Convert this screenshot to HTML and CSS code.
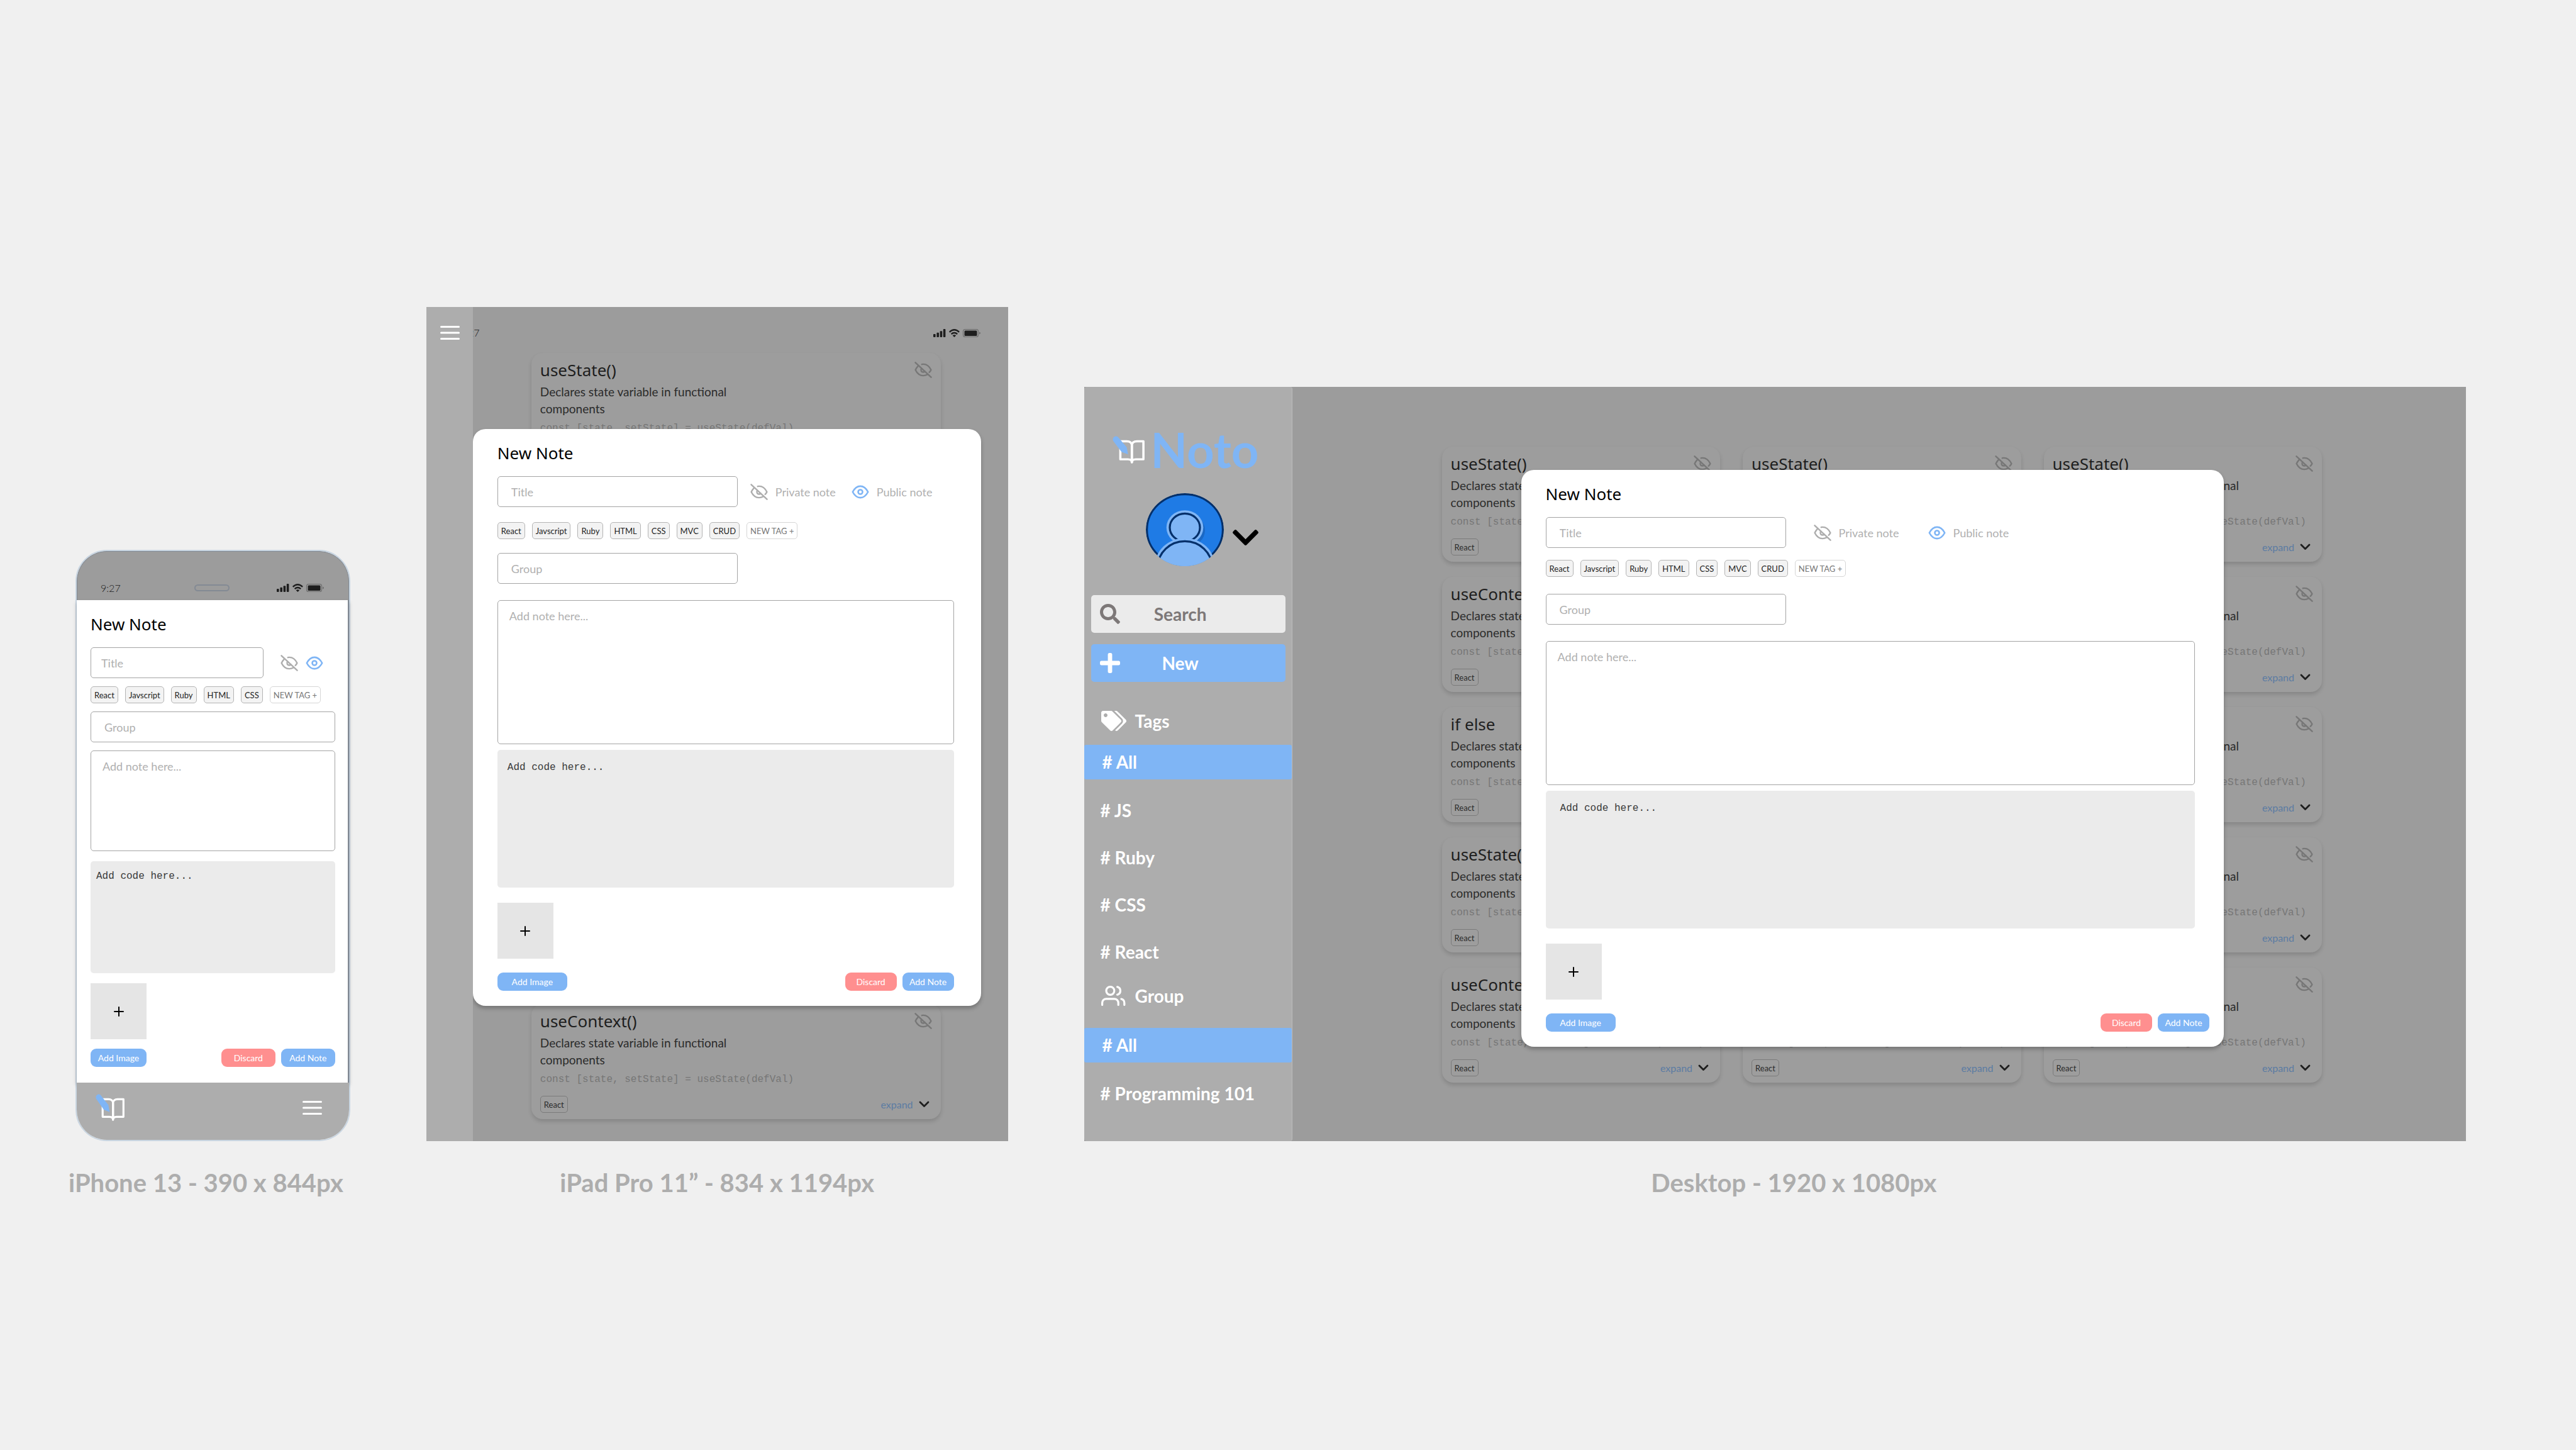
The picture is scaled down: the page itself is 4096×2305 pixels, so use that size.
FILE: index.html
```html
<!DOCTYPE html>
<html lang="en">
<head>
<meta charset="utf-8">
<title>Noto – New Note</title>
<meta name="viewport" content="width=device-width, initial-scale=1">
<link rel="stylesheet" href="styles.css">
</head>
<body>
<svg class="sprite" aria-hidden="true">
  <symbol id="eye" viewBox="0 0 28 26"><g fill="none" stroke="currentColor" stroke-width="2.6" stroke-linejoin="round"><path d="M1.8 13C5 7 9 3.9 14 3.9S23 7 26.2 13C23 19 19 22.100 14 22.100S5 19 1.800 13Z"/><circle cx="14" cy="13" r="3.500"/></g></symbol>
  <symbol id="eye-off" viewBox="0 0 28 26"><g fill="none" stroke="currentColor" stroke-width="2.400" stroke-linecap="round" stroke-linejoin="round"><path d="M1.500 1.300L26.500 24.700"/><path d="M5.600 7.200C3.800 9 2.600 11 1.600 13C4.500 19 9 22.100 14 22.100C16.300 22.100 18.500 21.500 20.300 20.500"/><path d="M11.800 4.200C12.500 4 13.300 3.900 14 3.900C19 3.900 23.500 7 26.400 13C25.800 14.400 24.900 15.700 23.600 16.800"/><path d="M11.300 10.600C9 13.400 11.200 16.500 14 16.500C15.200 16.500 16 16.100 16.700 15.500"/></g></symbol>
  <symbol id="book" viewBox="0 0 46 43" preserveAspectRatio="none"><g fill="none" stroke="#fff" stroke-width="3.200" stroke-linejoin="round" stroke-linecap="round"><path d="M11.200 8.300H20.500C24.700 8.300 27.700 10.500 27.700 14.500V41C27.700 37.500 25.500 36.300 22 36.300H11.200Z"/><path d="M44.300 8.300H35C30.700 8.300 27.700 10.500 27.700 14.500V41C27.700 37.500 29.900 36.300 33.400 36.300H44.300Z"/></g><path fill="#7fb5f5" d="M7.500 1.200L20.300 17.500L22.300 28.700L13 25L1 7.800C-1 3.500 3 -1.500 7.500 1.200Z"/></symbol>
  <symbol id="menu" viewBox="0 0 31 22"><path d="M1.500 1.500H29.500M1.500 11H29.500M1.500 20.500H29.500" stroke="#fff" stroke-width="3" stroke-linecap="round"/></symbol>
  <symbol id="status" viewBox="0 0 75 13"><g fill="#1e1e1e"><rect x="0" y="8" width="3.600" height="5" rx="1"/><rect x="5.400" y="5.800" width="3.600" height="7.200" rx="1"/><rect x="10.600" y="3.200" width="3.600" height="9.800" rx="1"/><rect x="15.800" y="0" width="3.600" height="13" rx="1"/><path d="M30.600 10.200Q33.400 8.200 36.200 10.200L33.400 13Z"/><rect x="49.500" y="2.500" width="20" height="8.500" rx="1.500"/></g><g fill="none" stroke="#1e1e1e" stroke-width="2.300"><path d="M25.700 4.900Q33.400 -2.400 41.100 4.900"/><path d="M28.600 8.100Q33.400 4 38.200 8.100"/></g><rect x="47.500" y=".6" width="24" height="12" rx="3" fill="none" stroke="#6e6e6e" stroke-width="1.200"/><path d="M73 4.500Q75 5 75 6.500T73 8.600Z" fill="#6e6e6e"/></symbol>
  <symbol id="chevron" viewBox="5 123 438 266"><path fill="currentColor" d="M207.029 381.476L12.686 187.132c-9.373-9.373-9.373-24.569 0-33.941l22.667-22.667c9.357-9.357 24.522-9.375 33.901-.04L224 284.505l154.745-154.021c9.379-9.335 24.544-9.317 33.901.04l22.667 22.667c9.373 9.373 9.373 24.569 0 33.941L240.971 381.476c-9.373 9.372-24.569 9.372-33.942 0z"/></symbol>
  <symbol id="caret" viewBox="0 0 17 11"><path d="M2 2L8.500 8.600L15 2" fill="none" stroke="#1e1e1e" stroke-width="2.800" stroke-linecap="round" stroke-linejoin="round"/></symbol>
  <symbol id="plus-thin" viewBox="0 0 16 16"><path d="M8 1V15M1 8H15" stroke="#000" stroke-width="2" stroke-linecap="round"/></symbol>
  <symbol id="plus" viewBox="0 32 448 448"><path fill="#fff" d="M416 208H272V64c0-17.670-14.330-32-32-32h-32c-17.670 0-32 14.330-32 32v144H32c-17.670 0-32 14.330-32 32v32c0 17.670 14.330 32 32 32h144v144c0 17.670 14.330 32 32 32h32c17.670 0 32-14.330 32-32V304h144c17.670 0 32-14.330 32-32v-32c0-17.670-14.330-32-32-32z"/></symbol>
  <symbol id="search" viewBox="0 0 512 512"><path fill="#7d7878" d="M505 442.700L405.300 343c-4.500-4.500-10.600-7-17-7H372c27.600-35.300 44-79.700 44-128C416 93.100 322.900 0 208 0S0 93.100 0 208s93.100 208 208 208c48.300 0 92.700-16.400 128-44v16.300c0 6.400 2.500 12.500 7 17l99.700 99.700c9.400 9.400 24.600 9.400 33.900 0l28.300-28.300c9.400-9.400 9.400-24.600.1-34zM208 336c-70.700 0-128-57.200-128-128 0-70.700 57.200-128 128-128 70.700 0 128 57.200 128 128 0 70.700-57.200 128-128 128z"/></symbol>
  <symbol id="tags" viewBox="0 0 640 512"><path fill="#fff" d="M497.941 225.941L286.059 14.059A48 48 0 0 0 252.118 0H48C21.490 0 0 21.490 0 48v204.118a48 48 0 0 0 14.059 33.941l211.882 211.882c18.744 18.745 49.136 18.746 67.882 0l204.118-204.118c18.745-18.745 18.745-49.137 0-67.882zM112 160c-26.510 0-48-21.490-48-48s21.490-48 48-48 48 21.490 48 48-21.490 48-48 48zm513.941 133.823L421.823 497.941c-18.745 18.745-49.137 18.745-67.882 0l-.36-.36L527.640 323.522c16.999-16.999 26.360-39.600 26.360-63.640s-9.362-46.641-26.360-63.640L331.397 0h48.721a48 48 0 0 1 33.941 14.059l211.882 211.882c18.745 18.745 18.745 49.137 0 67.882z"/></symbol>
  <symbol id="users" viewBox="0 2 24 20" preserveAspectRatio="xMinYMid"><g fill="none" stroke="#fff" stroke-width="2" stroke-linecap="round" stroke-linejoin="round"><path d="M17 21v-2a4 4 0 0 0-4-4H5a4 4 0 0 0-4 4v2"/><circle cx="9" cy="7" r="4"/><path d="M23 21v-2a4 4 0 0 0-3-3.870M16 3.130a4 4 0 0 1 0 7.750"/></g></symbol>
</svg>

<main class="board">
  <section class="phone" aria-label="Phone layout">
    <header class="phone-head">
      <span class="clock">9:27</span><span class="speaker"></span><svg class="status-icons"><use href="#status"/></svg>
    </header>
    <form class="dialog dialog-phone">
      <h2 class="dialog-title">New Note</h2>
      <div class="title-row">
        <input class="field field-title" type="text" placeholder="Title" aria-label="Title">
        <button type="button" class="visibility" aria-label="Private note"><svg class="eye"><use href="#eye-off"/></svg></button>
        <button type="button" class="visibility" aria-label="Public note"><svg class="eye eye-on"><use href="#eye"/></svg></button>
      </div>
      <div class="tags">
        <span class="tag">React</span><span class="tag">Javscript</span><span class="tag">Ruby</span><span class="tag">HTML</span><span class="tag">CSS</span><button type="button" class="tag tag-new">NEW TAG +</button>
      </div>
      <input class="field field-group" type="text" placeholder="Group" aria-label="Group">
      <textarea class="field note" placeholder="Add note here..." aria-label="Note"></textarea>
      <textarea class="code" placeholder="Add code here..." aria-label="Code"></textarea>
      <button type="button" class="image-slot" aria-label="Choose image"><svg class="plus-thin"><use href="#plus-thin"/></svg></button>
      <div class="actions">
        <button type="button" class="btn btn-image">Add Image</button>
        <button type="button" class="btn btn-discard">Discard</button>
        <button type="submit" class="btn btn-add">Add Note</button>
      </div>
    </form>
    <footer class="phone-foot">
      <svg class="book-small"><use href="#book"/></svg>
      <svg class="menu"><use href="#menu"/></svg>
    </footer>
  </section>

  <section class="tablet" aria-label="Tablet layout">
    <nav class="rail"><svg class="menu"><use href="#menu"/></svg></nav>
    <div class="tablet-main">
      <div class="tablet-status"><span class="clock">9:27</span><svg class="status-icons"><use href="#status"/></svg></div>
      <div class="cards cards-tablet" id="tablet-cards"></div>
    </div>
    <form class="dialog dialog-large dialog-tablet">
      <h2 class="dialog-title">New Note</h2>
      <div class="title-row">
        <input class="field field-title" type="text" placeholder="Title" aria-label="Title">
        <button type="button" class="visibility"><svg class="eye"><use href="#eye-off"/></svg>Private note</button>
        <button type="button" class="visibility"><svg class="eye eye-on"><use href="#eye"/></svg>Public note</button>
      </div>
      <div class="tags">
        <span class="tag">React</span><span class="tag">Javscript</span><span class="tag">Ruby</span><span class="tag">HTML</span><span class="tag">CSS</span><span class="tag">MVC</span><span class="tag">CRUD</span><button type="button" class="tag tag-new">NEW TAG +</button>
      </div>
      <input class="field field-group" type="text" placeholder="Group" aria-label="Group">
      <textarea class="field note" placeholder="Add note here..." aria-label="Note"></textarea>
      <textarea class="code" placeholder="Add code here..." aria-label="Code"></textarea>
      <button type="button" class="image-slot" aria-label="Choose image"><svg class="plus-thin"><use href="#plus-thin"/></svg></button>
      <div class="actions">
        <button type="button" class="btn btn-image">Add Image</button>
        <button type="button" class="btn btn-discard">Discard</button>
        <button type="submit" class="btn btn-add">Add Note</button>
      </div>
    </form>
  </section>

  <section class="desktop" aria-label="Desktop layout">
    <aside class="sidebar">
      <div class="logo"><svg class="book-large"><use href="#book"/></svg><span>Noto</span></div>
      <div class="profile">
        <svg class="avatar" viewBox="0 0 124 116">
          <defs><clipPath id="face"><ellipse cx="62" cy="58" rx="62" ry="58"/></clipPath></defs>
          <g clip-path="url(#face)">
            <ellipse cx="62" cy="58" rx="60.400" ry="56.400" fill="#1f7be5" stroke="#03306b" stroke-width="3.200"/>
            <ellipse cx="66" cy="59" rx="28" ry="26" fill="#1a68c4"/>
            <ellipse cx="62" cy="54.500" rx="29.300" ry="27.300" fill="#7fb5f5"/>
            <ellipse cx="62" cy="54.500" rx="24" ry="22.200" fill="#7fb5f5" stroke="#03306b" stroke-width="3.200"/>
            <ellipse cx="62" cy="117" rx="48" ry="45.800" fill="#7fb5f5"/>
            <ellipse cx="62" cy="117" rx="43" ry="40.600" fill="#7fb5f5" stroke="#03306b" stroke-width="3.200"/>
          </g>
        </svg>
        <svg class="profile-caret"><use href="#chevron"/></svg>
      </div>
      <label class="side-box search"><svg class="side-icon"><use href="#search"/></svg><input class="search-input" type="text" placeholder="Search" aria-label="Search"></label>
      <button type="button" class="side-box new"><svg class="side-icon"><use href="#plus"/></svg><span class="new-label">New</span></button>
      <h3 class="side-head"><svg class="side-head-icon"><use href="#tags"/></svg>Tags</h3>
      <nav class="side-list">
        <a class="side-link active" href="#all"># All</a>
        <a class="side-link" href="#js"># JS</a>
        <a class="side-link" href="#ruby"># Ruby</a>
        <a class="side-link" href="#css"># CSS</a>
        <a class="side-link" href="#react"># React</a>
      </nav>
      <h3 class="side-head side-head-group"><svg class="side-head-icon"><use href="#users"/></svg>Group</h3>
      <nav class="side-list">
        <a class="side-link active" href="#all-groups"># All</a>
        <a class="side-link" href="#programming"># Programming 101</a>
      </nav>
    </aside>
    <div class="desktop-main">
      <div class="cards cards-desktop" id="desktop-cards"></div>
    </div>
    <form class="dialog dialog-large dialog-desktop">
      <h2 class="dialog-title">New Note</h2>
      <div class="title-row">
        <input class="field field-title" type="text" placeholder="Title" aria-label="Title">
        <button type="button" class="visibility"><svg class="eye"><use href="#eye-off"/></svg>Private note</button>
        <button type="button" class="visibility"><svg class="eye eye-on"><use href="#eye"/></svg>Public note</button>
      </div>
      <div class="tags">
        <span class="tag">React</span><span class="tag">Javscript</span><span class="tag">Ruby</span><span class="tag">HTML</span><span class="tag">CSS</span><span class="tag">MVC</span><span class="tag">CRUD</span><button type="button" class="tag tag-new">NEW TAG +</button>
      </div>
      <input class="field field-group" type="text" placeholder="Group" aria-label="Group">
      <textarea class="field note" placeholder="Add note here..." aria-label="Note"></textarea>
      <textarea class="code" placeholder="Add code here..." aria-label="Code"></textarea>
      <button type="button" class="image-slot" aria-label="Choose image"><svg class="plus-thin"><use href="#plus-thin"/></svg></button>
      <div class="actions">
        <button type="button" class="btn btn-image">Add Image</button>
        <button type="button" class="btn btn-discard">Discard</button>
        <button type="submit" class="btn btn-add">Add Note</button>
      </div>
    </form>
  </section>

  <p class="caption caption-phone">iPhone 13 - 390 x 844px</p>
  <p class="caption caption-tablet">iPad Pro 11” - 834 x 1194px</p>
  <p class="caption caption-desktop">Desktop - 1920 x 1080px</p>
</main>

<template id="card">
  <article class="card">
    <div class="card-head"><h3 class="card-title"></h3><svg class="eye"><use href="#eye-off"/></svg></div>
    <p class="card-text">Declares state variable in functional components</p>
    <code class="card-code">const [state, setState] = useState(defVal)</code>
    <div class="card-foot"><span class="tag">React</span><a class="expand" href="#expand">expand<svg class="caret"><use href="#caret"/></svg></a></div>
  </article>
</template>
<script src="cards.js"></script>
</body>
</html>
```
FILE: cards.js
```javascript
// Titles of the note cards, one entry per row of the list.
const rows = ["useState()", "useContext()", "if else", "useState()", "useContext()"];

function fill(id, titles) {
  const list = document.getElementById(id);
  const template = document.getElementById("card");
  for (const title of titles) {
    const card = template.content.cloneNode(true);
    card.querySelector(".card-title").textContent = title;
    list.append(card);
  }
}

fill("tablet-cards", [...rows, "useContext()"]);
fill("desktop-cards", rows.flatMap((title) => [title, title, title]));
```
FILE: styles.css
```css
* { box-sizing: border-box; }

:root {
  --grey: #adadad;
  --dim: #9c9c9c;
  --blue: #7fb5f5;
  --round: Lato, "Open Sans", sans-serif;
}

body {
  margin: 0;
  background: #f0f0f0;
  font-family: var(--round);
  font-size: 18px;
}

h2, h3, p { margin: 0; }
svg { display: block; flex: none; }
a { color: inherit; text-decoration: none; }
button, input, textarea { font: inherit; margin: 0; padding: 0; border: 0; background: none; outline: 0; }
textarea { display: block; resize: none; }
.sprite { position: absolute; width: 0; height: 0; }

.board {
  display: grid;
  grid-template-columns: 436fr 925fr 2198fr;
  column-gap: 121px;
  row-gap: 41px;
  align-items: end;
  align-content: start;
  min-height: 100vh;
  padding: 488px 175px 0 120px;
}

.caption {
  color: var(--grey);
  font-size: 40px;
  font-weight: 700;
  line-height: 50px;
  text-align: center;
  white-space: nowrap;
}
.caption-phone { margin: 0 11px 0 -11px; }
.caption-desktop { padding-left: 60px; }

/* Shared icons */
.eye { width: 28px; height: 26px; color: #777; }
.menu { width: 31px; height: 22px; }
.status-icons { width: 75px; height: 13px; }
.clock { font-size: 16px; line-height: 20px; font-weight: 300; color: #1e1e1e; }
.plus-thin { width: 16px; height: 16px; }

/* Phone */
.phone {
  border: 2px solid #c9d6e2;
  border-radius: 50px;
}
.phone-head {
  display: grid;
  grid-template-columns: 1fr auto 1fr;
  align-items: center;
  height: 78px;
  padding: 38px 39px 0 37px;
  background: var(--dim);
  border: 1px solid #7f8791;
  border-bottom: 0;
  border-radius: 48px 48px 0 0;
}
.phone-head .status-icons { justify-self: end; }
.speaker { width: 56px; height: 11px; border: 2px solid #838a94; border-radius: 6px; }
.phone-foot {
  display: flex;
  justify-content: space-between;
  align-items: center;
  height: 91px;
  padding: 0 43px 12px 30px;
  background: var(--grey);
  border-radius: 0 0 48px 48px;
}
.book-small { width: 46px; height: 43px; }

/* New note dialog */
.dialog {
  display: flex;
  flex-direction: column;
  background: #fff;
  box-shadow: 0 4px 6px rgba(0, 0, 0, .25);
}
.dialog-title {
  font: 400 26px/36px "Noto Sans", sans-serif;
  color: #000;
}
.title-row { display: flex; align-items: center; margin-top: 19px; }
.field {
  height: 49px;
  border: 1px solid #a4a4a4;
  border-radius: 5px;
  color: #333;
}
.field::placeholder { color: #b0b0b0; opacity: 1; }
.field-title { padding-left: 21px; }
.field-group { padding-left: 21px; }
.visibility { display: flex; align-items: center; gap: 12px; color: #b0b0b0; white-space: nowrap; }
.visibility .eye { color: var(--grey); }
.visibility .eye-on { color: var(--blue); }
.tags { display: flex; gap: 11px; }
.tag {
  display: block;
  height: 27px;
  padding: 0 5px;
  border: 1px solid #b4b4b4;
  border-radius: 5px;
  background: #f3f3f3;
  color: #1e1e1e;
  font-size: 13px;
  line-height: 26px;
  white-space: nowrap;
}
.tag-new { background: #fff; border-color: #d6d6d6; color: #777; }
.note { padding: 12px 18px; line-height: 24px; }
.code {
  padding: 16px;
  border-radius: 5px;
  background: #ebebeb;
  font: 16px/20px "Liberation Mono", monospace;
}
.code::placeholder { color: #3a3a3a; opacity: 1; }
.image-slot {
  display: flex;
  align-items: center;
  justify-content: center;
  width: 89px;
  height: 89px;
  background: #e5e5e5;
}
.actions { display: flex; gap: 9px; }
.btn {
  width: 82px;
  height: 29px;
  border-radius: 9px;
  background: var(--blue);
  color: #fff;
  font-size: 14px;
}
.btn-image { margin-right: auto; }
.btn-discard { background: #ff8f8f; }

.dialog-phone { padding: 20px 20px 25px 22px; border-right: 2px solid #7f8791; }
.dialog-phone .field-title { width: 275px; padding-left: 16px; margin-right: 27px; }
.dialog-phone .visibility + .visibility { margin-left: 12px; }
.dialog-phone .tags, .dialog-phone .field-group, .dialog-phone .note { margin-top: 13px; }
.dialog-phone .note { height: 160px; }
.dialog-phone .code { height: 178px; margin-top: 16px; padding: 14px 9px; }
.dialog-phone .image-slot { margin-top: 16px; }
.dialog-phone .actions { margin-top: 15px; }
.dialog-phone .btn { width: 86px; }
.dialog-phone .btn-image { width: 89px; }

.dialog-large {
  position: absolute;
  padding: 20px 43px 24px 39px;
  border-radius: 20px;
}
.dialog-large .field-title, .dialog-large .field-group { width: 382px; }
.dialog-large .tags { margin-top: 24px; }
.dialog-large .field-group { margin-top: 22px; }
.dialog-large .note { height: 229px; margin-top: 26px; }
.dialog-large .code { height: 219px; margin-top: 9px; padding-top: 18px; }
.dialog-large .image-slot { margin-top: 24px; }
.dialog-large .actions { margin-top: 22px; }
.dialog-large .btn-image { width: 111px; }
.dialog-tablet { top: 194px; left: 74px; right: 43px; }
.dialog-tablet .visibility { margin-left: 20px; }
.dialog-tablet .visibility + .visibility { margin-left: 25px; }
.dialog-desktop { top: 132px; left: 695px; right: 385px; padding-right: 46px; }
.dialog-desktop .visibility { margin-left: 44px; }
.dialog-desktop .visibility + .visibility { margin-left: 46px; }
.dialog-desktop .tags { margin-top: 19px; }
.dialog-desktop .field-group { margin-top: 27px; }
.dialog-desktop .code { padding-left: 23px; }
.dialog-desktop .actions { margin-right: -23px; }

/* Cards behind the dialog */
.cards { display: grid; row-gap: 24px; }
.card {
  padding: 10px 14px;
  border-radius: 18px;
  background: #9d9d9d;
  box-shadow: 0 4px 6px rgba(0, 0, 0, .14);
}
.card-head { display: flex; align-items: center; justify-content: space-between; height: 33px; }
.card-title { font: 400 26px/34px "Noto Sans", sans-serif; color: #1e1e1e; }
.card-text { max-width: 340px; margin-top: 5px; color: #2b2b2b; font-size: 19px; line-height: 27px; }
.card-code { display: block; color: #767676; font: 16px/24px "Liberation Mono", monospace; margin-top: 6px; white-space: nowrap; }
.card-foot { display: flex; align-items: center; justify-content: space-between; margin-top: 14px; }
.card-foot .tag { background: none; border-color: #7b7b7b; color: #2b2b2b; }
.expand { display: flex; align-items: center; gap: 9px; padding-right: 4px; color: #5c7ca3; font-size: 16px; line-height: 20px; }
.caret { width: 17px; height: 11px; }

/* Tablet */
.tablet { position: relative; display: flex; background: var(--dim); }
.rail { position: relative; z-index: 1; width: 74px; flex: none; padding: 30px 22px; background: var(--grey); }
.tablet-main { flex: 1; min-width: 0; padding-bottom: 35px; }
.tablet-status {
  display: flex;
  align-items: center;
  justify-content: space-between;
  height: 73px;
  margin-left: -21px;
  padding: 9px 44px 0 0;
}
.cards-tablet { margin: 0 107px 0 93px; }

/* Desktop */
.desktop { position: relative; display: flex; background: var(--dim); }
.desktop-main { flex: 1; min-width: 0; padding: 95px 229px 93px 238px; }
.cards-desktop { grid-template-columns: repeat(3, 1fr); column-gap: 36px; }

.sidebar {
  width: 331px;
  flex: none;
  padding-top: 64px;
  border-right: 1px solid #bcbcbc;
  border-radius: 4px;
  background: var(--grey);
  color: #fff;
  font-size: 28px;
  font-weight: 700;
}
.logo { display: flex; align-items: center; gap: 10px; padding-left: 45px; color: var(--blue); font-size: 76px; line-height: 72px; }
.book-large { width: 51px; height: 44px; }
.profile { display: flex; align-items: center; gap: 14px; margin-top: 33px; padding-left: 98px; }
.avatar { width: 124px; height: 116px; }
.profile-caret { width: 41px; height: 25px; margin-top: 24px; color: #000; }
.side-box {
  display: flex;
  align-items: center;
  width: 309px;
  height: 60px;
  margin-left: 11px;
  padding: 0 72px 0 13px;
  border-radius: 5px;
}
.side-icon { width: 34px; height: 32px; }
.search { margin-top: 46px; background: #ebebeb; }
.search-input { flex: 1; min-width: 0; text-align: center; color: #7d7878; }
.search-input::placeholder { color: #7d7878; opacity: 1; }
.new { margin-top: 18px; background: var(--blue); color: #fff; }
.new-label { flex: 1; text-align: center; }
.side-head { display: flex; align-items: center; gap: 14px; height: 32px; margin: 46px 0 22px; padding-left: 27px; font-size: 28px; }
.side-head-icon { width: 40px; height: 32px; }
.side-head-group { margin: 16px 0 35px; }
.side-link { display: block; height: 75px; padding-left: 26px; line-height: 75px; }
.side-link.active { height: 55px; margin-bottom: 12px; padding-left: 29px; border-radius: 3px; background: var(--blue); line-height: 55px; }
```
